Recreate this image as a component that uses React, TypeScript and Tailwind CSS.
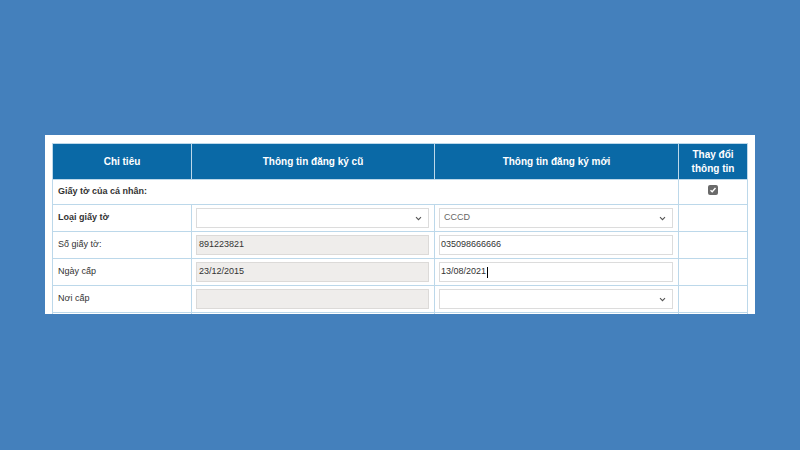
import { useState } from "react";

type Row = {
  label: string;
  bold?: boolean;
  kind: "select" | "input";
  oldValue: string;
  newValue: string;
  caret?: boolean;
};

const rows: Row[] = [
  { label: "Loại giấy tờ", bold: true, kind: "select", oldValue: "", newValue: "CCCD" },
  { label: "Số giấy tờ:", kind: "input", oldValue: "891223821", newValue: "035098666666" },
  { label: "Ngày cấp", kind: "input", oldValue: "23/12/2015", newValue: "13/08/2021", caret: true },
  { label: "Nơi cấp", kind: "select", oldValue: "", newValue: "" },
];

function Chevron() {
  return (
    <svg width="7" height="5" viewBox="0 0 7 5" className="shrink-0">
      <polyline points="1,1.2 3.5,3.7 6,1.2" fill="none" stroke="#555" strokeWidth="1.1" />
    </svg>
  );
}

function SelectBox({ value }: { value: string }) {
  return (
    <div className="flex h-[20px] items-center justify-between border border-[#dcdcdc] bg-white pl-[4px] pr-[6px] text-[#666]">
      <span>{value}</span>
      <Chevron />
    </div>
  );
}

function TextBox({ value, disabled, caret }: { value: string; disabled?: boolean; caret?: boolean }) {
  return (
    <div
      className={
        disabled
          ? "flex h-[20px] items-center border border-[#dcdad8] bg-[#efedeb] px-[2px] text-[#333]"
          : "flex h-[20px] items-center border border-[#dcdcdc] bg-white px-[1px] text-[#333]"
      }
    >
      <span>{value}</span>
      {caret && <span className="ml-px h-[11px] w-px bg-black" />}
    </div>
  );
}

function Check({ checked }: { checked: boolean }) {
  return (
    <span className="inline-flex h-[10px] w-[10px] items-center justify-center rounded-[2px] bg-[#6a6a6a]">
      {checked && (
        <svg width="8" height="8" viewBox="0 0 8 8">
          <polyline points="1.5,4.2 3.2,5.8 6.5,2" fill="none" stroke="#fff" strokeWidth="1.4" />
        </svg>
      )}
    </span>
  );
}

export default function App() {
  const [changed] = useState(true);

  return (
    <div className="flex h-[450px] w-[800px] items-start justify-center bg-[#4480bc] pt-[135px] font-['Liberation_Sans',Arial,sans-serif] text-[9px]">
      <div className="h-[179px] w-[710px] overflow-hidden bg-white pl-[7px] pt-[8px]">
        <table className="w-[695px] table-fixed border-collapse">
          <colgroup>
            <col className="w-[139px]" />
            <col className="w-[243px]" />
            <col className="w-[244px]" />
            <col className="w-[69px]" />
          </colgroup>
          <thead>
            <tr className="h-[36px] bg-[#0a69a6] text-[10px] font-bold text-white">
              <th className="border border-[#bcd8ea] px-[4px]">Chi tiêu</th>
              <th className="border border-[#bcd8ea] border-l-[#5b9ccb] px-[4px]">Thông tin đăng ký cũ</th>
              <th className="border border-[#bcd8ea] border-l-[#5b9ccb] px-[4px]">Thông tin đăng ký mới</th>
              <th className="border border-[#bcd8ea] border-l-[#5b9ccb] px-[6px] leading-[14px]">Thay đổi thông tin</th>
            </tr>
          </thead>
          <tbody className="text-[#333]">
            <tr className="h-[25px]">
              <td colSpan={3} className="border border-[#bcd8ea] px-[5px] font-bold">
                Giấy tờ của cá nhân:
              </td>
              <td className="border border-[#bcd8ea] text-center align-middle">
                <Check checked={changed} />
              </td>
            </tr>
            {rows.map((row) => (
              <tr key={row.label} className="h-[27px]">
                <td className={row.bold ? "border border-[#bcd8ea] px-[5px] font-bold" : "border border-[#bcd8ea] px-[5px]"}>
                  {row.label}
                </td>
                <td className="border border-[#bcd8ea] pl-[4px] pr-[5px]">
                  {row.kind === "select" && row.label === "Loại giấy tờ" ? (
                    <SelectBox value={row.oldValue} />
                  ) : (
                    <TextBox value={row.oldValue} disabled />
                  )}
                </td>
                <td className="border border-[#bcd8ea] pl-[4px] pr-[5px]">
                  {row.kind === "select" ? (
                    <SelectBox value={row.newValue} />
                  ) : (
                    <TextBox value={row.newValue} caret={row.caret} />
                  )}
                </td>
                <td className="border border-[#bcd8ea]" />
              </tr>
            ))}
            <tr className="h-[27px]">
              <td className="border border-[#bcd8ea]" />
              <td className="border border-[#bcd8ea]" />
              <td className="border border-[#bcd8ea]" />
              <td className="border border-[#bcd8ea]" />
            </tr>
          </tbody>
        </table>
      </div>
    </div>
  );
}
